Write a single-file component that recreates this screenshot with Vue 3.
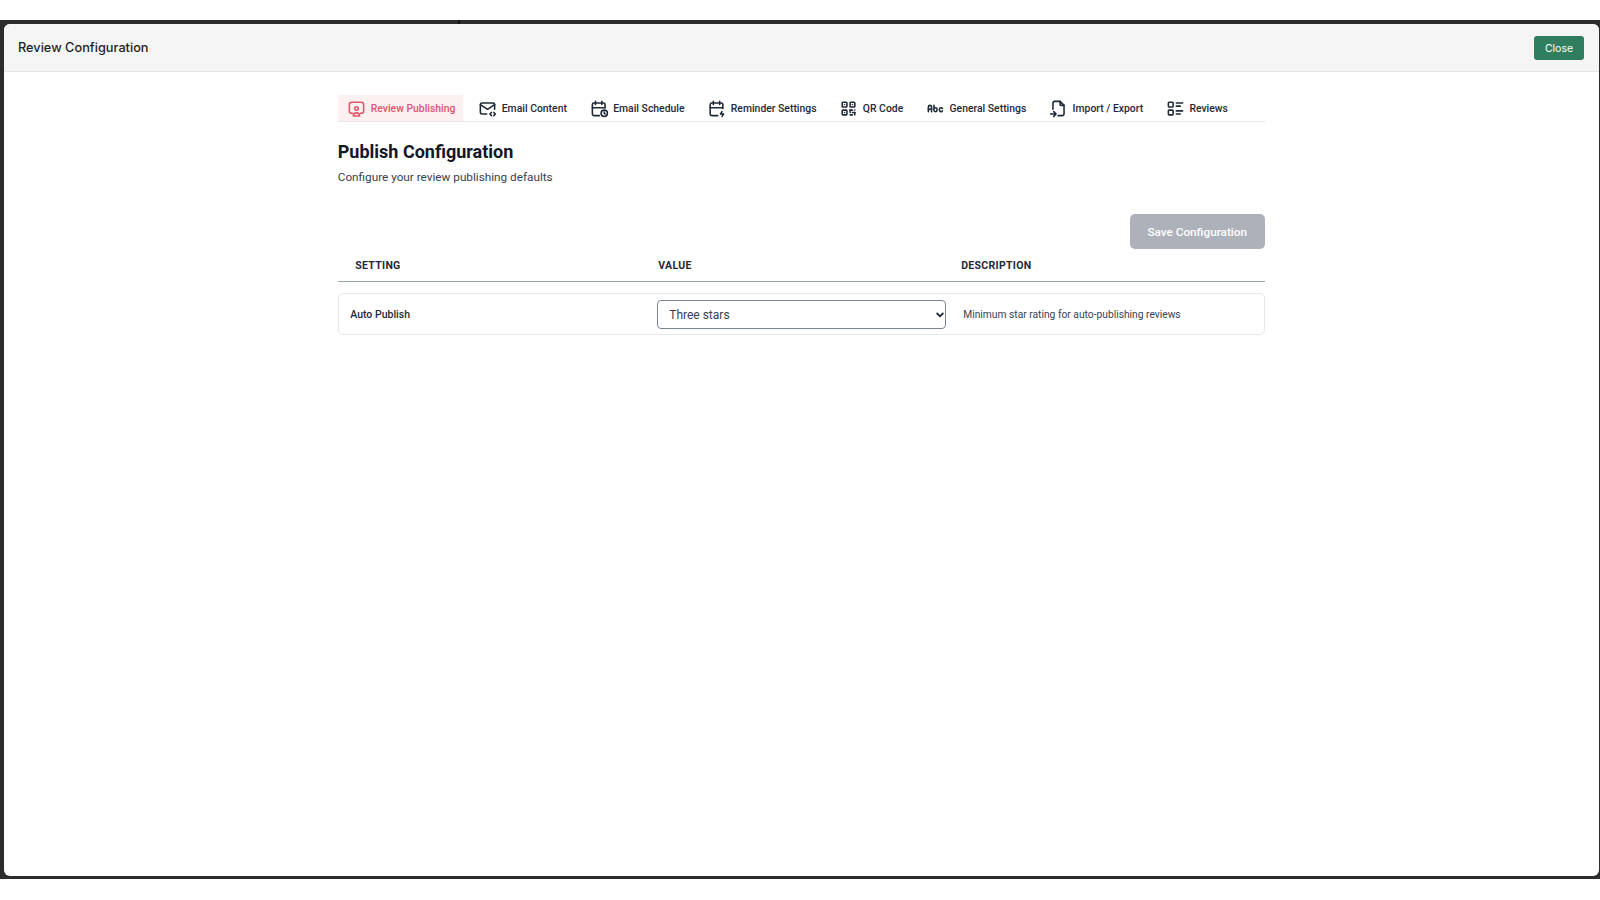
<script setup>
const tabs = [
  { label: 'Review Publishing', active: true, key: 'review' },
  { label: 'Email Content', key: 'mail' },
  { label: 'Email Schedule', key: 'time' },
  { label: 'Reminder Settings', key: 'bolt' },
  { label: 'QR Code', key: 'qr' },
  { label: 'General Settings', key: 'abc' },
  { label: 'Import / Export', key: 'import' },
  { label: 'Reviews', key: 'list' },
]
</script>

<template>
  <div class="frame">
    <div class="panel">
      <header class="head">
        <h1 class="title">Review Configuration</h1>
        <button class="close">Close</button>
      </header>
      <main class="content">
        <nav class="tabs">
          <a v-for="t in tabs" :key="t.key" class="tab" :class="{ active: t.active }">
            <svg class="ico" viewBox="0 0 24 24" fill="none" stroke="currentColor" stroke-width="2" stroke-linecap="round" stroke-linejoin="round">
              <template v-if="t.key === 'review'">
                <path d="M7 18h-1a3 3 0 0 1 -3 -3v-8a3 3 0 0 1 3 -3h12a3 3 0 0 1 3 3v8a3 3 0 0 1 -3 3h-1" />
                <circle cx="12" cy="12" r="2.2" />
                <path d="M8 21.5a4 4 0 0 1 8 0z" />
              </template>
              <template v-else-if="t.key === 'mail'">
                <path d="M11 19h-6a2 2 0 0 1 -2 -2v-10a2 2 0 0 1 2 -2h14a2 2 0 0 1 2 2v6" />
                <path d="M3 7l9 6l9 -6" />
                <path d="M20 21l2 -2l-2 -2" />
                <path d="M17 17l-2 2l2 2" />
              </template>
              <template v-else-if="t.key === 'time'">
                <path d="M11.795 21h-6.795a2 2 0 0 1 -2 -2v-12a2 2 0 0 1 2 -2h12a2 2 0 0 1 2 2v4" />
                <circle cx="18" cy="18" r="4" />
                <path d="M15 3v4" />
                <path d="M7 3v4" />
                <path d="M3 11h16" />
                <path d="M18 16.496v1.504l1 1" />
              </template>
              <template v-else-if="t.key === 'bolt'">
                <path d="M13.5 21h-7.5a2 2 0 0 1 -2 -2v-12a2 2 0 0 1 2 -2h12a2 2 0 0 1 2 2v5" />
                <path d="M16 3v4" />
                <path d="M8 3v4" />
                <path d="M4 11h16" />
                <path d="M19 16l-2 3h4l-2 3" />
              </template>
              <template v-else-if="t.key === 'qr'">
                <rect x="4" y="4" width="6" height="6" rx="1" />
                <path d="M7 17v.01" />
                <rect x="14" y="4" width="6" height="6" rx="1" />
                <path d="M7 7v.01" />
                <rect x="4" y="14" width="6" height="6" rx="1" />
                <path d="M17 7v.01" />
                <path d="M14 14h3" />
                <path d="M20 14v.01" />
                <path d="M14 14v3" />
                <path d="M14 20h3" />
                <path d="M17 17h3" />
                <path d="M20 17v3" />
              </template>
              <template v-else-if="t.key === 'abc'">
                <path d="M3 16v-6a2 2 0 1 1 4 0v6" />
                <path d="M3 13h4" />
                <path d="M10 8v6a2 2 0 1 0 4 0v-1a2 2 0 1 0 -4 0v1" />
                <path d="M20.732 12a2 2 0 0 0 -3.732 1v1a2 2 0 0 0 3.726 1.01" />
              </template>
              <template v-else-if="t.key === 'import'">
                <path d="M14 3v4a1 1 0 0 0 1 1h4" />
                <path d="M5 13v-8a2 2 0 0 1 2 -2h7l5 5v11a2 2 0 0 1 -2 2h-5.5m-9.5 -2h7m-3 -3l3 3l-3 3" />
              </template>
              <template v-else>
                <path d="M13 5h8" />
                <path d="M13 9h5" />
                <path d="M13 15h8" />
                <path d="M13 19h5" />
                <rect x="3" y="4" width="6" height="6" rx="1" />
                <rect x="3" y="14" width="6" height="6" rx="1" />
              </template>
            </svg>
            <span>{{ t.label }}</span>
          </a>
        </nav>

        <h2 class="heading">Publish Configuration</h2>
        <p class="sub">Configure your review publishing defaults</p>

        <div class="actions">
          <button class="save" disabled>Save Configuration</button>
        </div>

        <div class="thead">
          <div>SETTING</div>
          <div>VALUE</div>
          <div>DESCRIPTION</div>
        </div>

        <div class="row">
          <div class="name">Auto Publish</div>
          <div class="sel-wrap">
            <select class="sel">
              <option>Three stars</option>
            </select>
            <svg class="chev" viewBox="0 0 8 6" fill="none" stroke="currentColor" stroke-width="1.8" stroke-linecap="round" stroke-linejoin="round">
              <path d="M1.2 1.5l2.8 2.8l2.8 -2.8" />
            </svg>
          </div>
          <div class="desc">Minimum star rating for auto-publishing reviews</div>
        </div>
      </main>
    </div>
  </div>
</template>

<style>
html, body { margin: 0; background: #fff; }
</style>

<style scoped>
.frame {
  box-sizing: border-box;
  margin-top: 20px;
  height: 859px;
  padding: 4px 1px 3px 3.5px;
  background: linear-gradient(90deg, transparent 458px, #141414 458px, #141414 460px, transparent 460px) no-repeat top / 100% 4px, #2c2c2c;
  font-family: Roboto, "Noto Sans", sans-serif;
  display: flex;
}
.panel {
  flex: 1;
  display: flex;
  flex-direction: column;
  background: #fff;
  border-radius: 6px;
  overflow: hidden;
}
.head {
  height: 48px;
  box-sizing: border-box;
  flex: none;
  display: flex;
  align-items: center;
  justify-content: space-between;
  padding: 0 15px 0 14.5px;
  background: #f5f5f5;
  border-bottom: 1px solid #e5e5e5;
}
.title {
  margin: 0;
  font-family: Inter, sans-serif;
  font-size: 12.75px;
  font-weight: 500;
  color: #1f1f1f;
}
.close {
  width: 50px;
  height: 24px;
  margin-top: 1px;
  padding: 0;
  border: 0;
  border-radius: 3px;
  background: #2f7f5f;
  color: #fff;
  font-family: Inter, sans-serif;
  font-size: 10.5px;
}
.content {
  width: 927px;
  margin: 0 auto;
  padding-top: 23px;
}
.tabs {
  display: flex;
  gap: 6.8px;
  height: 27px;
  box-sizing: border-box;
  border-bottom: 1px solid #e5e7eb;
}
.tab {
  display: flex;
  align-items: center;
  gap: 4.5px;
  padding: 0 8px 0 8px;
  font-size: 10.4px;
  font-weight: 500;
  color: #1f2937;
  white-space: nowrap;
}
.tab.active {
  padding-left: 9.5px;
  background: #fdf0f0;
  color: #e0566a;
}
.ico {
  width: 19px;
  height: 19px;
  flex: none;
}
.heading {
  margin: 18px 0 0;
  font-size: 18px;
  line-height: 24px;
  font-weight: 700;
  color: #111827;
}
.sub {
  margin: 5px 0 0;
  font-size: 11.75px;
  line-height: 16px;
  color: #374151;
}
.actions {
  display: flex;
  justify-content: flex-end;
  margin-top: 29px;
}
.save {
  width: 135px;
  height: 35px;
  padding: 0;
  border: 0;
  border-radius: 5px;
  background: #adb2ba;
  color: #fff;
  font-family: inherit;
  font-size: 11.75px;
  font-weight: 500;
}
.thead {
  display: grid;
  grid-template-columns: 303px 303px 1fr;
  box-sizing: border-box;
  height: 33px;
  padding: 0 0 0 17.5px;
  align-items: center;
  border-bottom: 1px solid #9aa3a3;
  font-size: 10.5px;
  font-weight: 700;
  letter-spacing: 0.3px;
  color: #1f2937;
}
.row {
  display: grid;
  grid-template-columns: 307px 306px 1fr;
  align-items: center;
  box-sizing: border-box;
  height: 42px;
  margin-top: 11.25px;
  padding-left: 11.5px;
  border: 1px solid #e5e7eb;
  border-radius: 5px;
}
.name {
  font-size: 10.5px;
  font-weight: 500;
  color: #1f2937;
}
.sel-wrap {
  position: relative;
  width: 289px;
  margin-top: 1px;
}
.sel {
  appearance: none;
  display: block;
  width: 100%;
  height: 29px;
  box-sizing: border-box;
  padding: 0 7px 0 11px;
  border: 1px solid #7b8290;
  border-radius: 4px;
  background: #fff;
  color: #374151;
  font-family: inherit;
  font-size: 12px;
}
.chev {
  position: absolute;
  top: 11.5px;
  right: 2.5px;
  width: 8px;
  height: 6px;
  color: #1f2937;
  pointer-events: none;
}
.desc {
  font-size: 10.25px;
  color: #374151;
}
</style>
